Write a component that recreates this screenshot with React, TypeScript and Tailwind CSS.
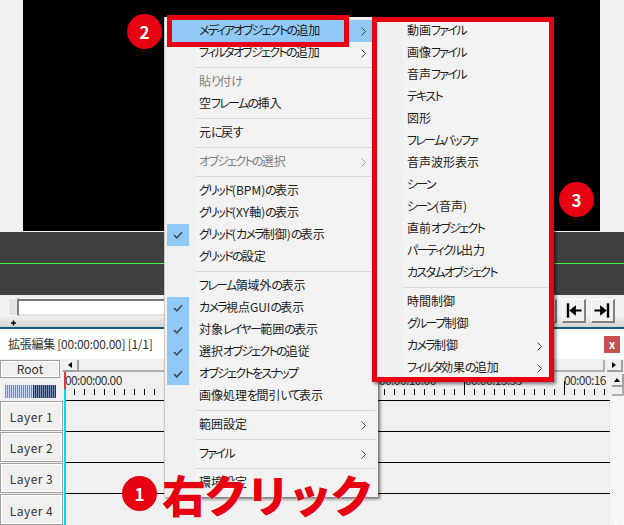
// AviUtl timeline right-click menu, annotated screenshot

// ── Menu data ──────────────────────────────────────────────────────────────

type Entry =
  | { sep: true }
  | { sep?: false; label: string; checked?: boolean; disabled?: boolean; arrow?: boolean; active?: boolean };

const MAIN_MENU: Entry[] = [
  { label: 'メディアオブジェクトの追加', arrow: true, active: true },
  { label: 'フィルタオブジェクトの追加', arrow: true },
  { sep: true },
  { label: '貼り付け', disabled: true },
  { label: '空フレームの挿入' },
  { sep: true },
  { label: '元に戻す' },
  { sep: true },
  { label: 'オブジェクトの選択', disabled: true, arrow: true },
  { sep: true },
  { label: 'グリッド(BPM)の表示' },
  { label: 'グリッド(XY軸)の表示' },
  { label: 'グリッド(カメラ制御)の表示', checked: true },
  { label: 'グリッドの設定' },
  { sep: true },
  { label: 'フレーム領域外の表示' },
  { label: 'カメラ視点GUIの表示', checked: true },
  { label: '対象レイヤー範囲の表示', checked: true },
  { label: '選択オブジェクトの追従', checked: true },
  { label: 'オブジェクトをスナップ', checked: true },
  { label: '画像処理を間引いて表示' },
  { sep: true },
  { label: '範囲設定', arrow: true },
  { sep: true },
  { label: 'ファイル', arrow: true },
  { sep: true },
  { label: '環境設定' },
];

const SUB_MENU: Entry[] = [
  { label: '動画ファイル' },
  { label: '画像ファイル' },
  { label: '音声ファイル' },
  { label: 'テキスト' },
  { label: '図形' },
  { label: 'フレームバッファ' },
  { label: '音声波形表示' },
  { label: 'シーン' },
  { label: 'シーン(音声)' },
  { label: '直前オブジェクト' },
  { label: 'パーティクル出力' },
  { label: 'カスタムオブジェクト' },
  { sep: true },
  { label: '時間制御' },
  { label: 'グループ制御' },
  { label: 'カメラ制御', arrow: true },
  { label: 'フィルタ効果の追加', arrow: true },
];

// ── Small drawings ─────────────────────────────────────────────────────────

function Chevron({ muted }: { muted?: boolean }) {
  return (
    <svg width="5" height="9" viewBox="0 0 5 9" className="ml-auto mr-[9px] shrink-0">
      <path d="M0.5 0.5L4.5 4.5L0.5 8.5" fill="none" stroke={muted ? '#a6a6a6' : '#444'} strokeWidth="1" />
    </svg>
  );
}

function Check() {
  return (
    <svg width="10" height="8" viewBox="0 0 10 8">
      <path d="M1 4L3.8 6.8L9 1.2" fill="none" stroke="#3c4a55" strokeWidth="1.5" />
    </svg>
  );
}

function JumpIcon({ flip }: { flip?: boolean }) {
  return (
    <svg width="22" height="22" viewBox="0 0 22 22" className={flip ? '-scale-x-100' : ''}>
      <rect x="4" y="3" width="2.5" height="15" fill="#000" />
      <path d="M6.5 10.5L13.5 5V9.5H19.5V11.5H13.5V16Z" fill="#000" />
    </svg>
  );
}

// Kana are set narrower than kanji in the menu font, so tighten only those runs
function MenuLabel({ text }: { text: string }) {
  const runs = text.match(/[\u3040-\u30ff]+|[^\u3040-\u30ff]+/g) ?? [];
  return (
    <>
      {runs.map((run, i) =>
        /[\u3040-\u30ff]/.test(run) ? (
          <span key={i} className="tracking-[-1.7px]">
            {run}
          </span>
        ) : (
          run
        ),
      )}
    </>
  );
}

// ── Menu ───────────────────────────────────────────────────────────────────

function MenuRows({ items, gutter, textPad }: { items: Entry[]; gutter: string; textPad: string }) {
  return (
    <>
      {items.map((item, i) =>
        item.sep ? (
          <div key={i} className={`h-[7px] flex items-center ${gutter}`}>
            <div className="h-px w-full bg-[#d7d7d7]" />
          </div>
        ) : (
          <div
            key={i}
            className={`flex h-[22px] items-center whitespace-nowrap text-[12px] ${
              item.active ? 'bg-[#90c8f6]' : ''
            } ${item.disabled ? 'text-[#808080]' : 'text-[#1c1c1c]'}`}
          >
            <div
              className={`flex h-full w-[22px] shrink-0 items-center justify-center ${
                item.checked ? 'bg-[#90c8f6]' : ''
              }`}
            >
              {item.checked && <Check />}
            </div>
            <span className={`pb-[2px] ${textPad}`}>
              <MenuLabel text={item.label} />
            </span>
            {item.arrow && <Chevron muted={item.disabled} />}
          </div>
        ),
      )}
    </>
  );
}

function Badge({ n, className }: { n: number; className: string }) {
  return (
    <div
      className={`absolute flex h-[35px] w-[35px] items-center justify-center rounded-full bg-[#e60012] text-[17px] font-bold text-white ${className}`}
    >
      {n}
    </div>
  );
}

// ── Timeline pieces ────────────────────────────────────────────────────────

const LAYER_BTN =
  'flex h-[30px] w-[63px] items-center justify-center border border-[#a0a0a0] pt-[2px] shadow-[inset_0_0_0_1px_#fff] text-[12px] text-[#333] tracking-[0.04em]';

function Ruler() {
  const ticks = [];
  for (let x = 74; x < 610; x += 10) {
    const big = (x - 64) % 100 === 0;
    ticks.push(<line key={x} x1={x - 64 + 0.5} x2={x - 64 + 0.5} y1={big ? 9 : 17} y2={23} stroke="#000" />);
  }
  return (
    <div className="relative h-[29px] border-b border-black text-[12px] leading-[16px] tracking-[-0.6px] text-[#333]">
      <svg width="546" height="28" className="absolute left-0 top-0">
        {ticks}
      </svg>
      <span className="absolute left-[1px] top-0">00:00:00.00</span>
      <span className="absolute left-[315px] top-0">00:00:10.00</span>
      <span className="absolute left-[401px] top-0">00:00:13.33</span>
      <span className="absolute left-[500px] top-0">00:00:16</span>
    </div>
  );
}

export default function App() {
  return (
    <div className="relative h-[525px] w-[624px] overflow-hidden bg-[#f0f0f0] font-['Noto_Sans_CJK_JP','Noto_Sans',sans-serif] [font-feature-settings:'palt']">
      {/* Preview */}
      <div className="h-[231px] pl-[23px]">
        <div className="h-full w-[577px] bg-black" />
      </div>
      <div className="h-px bg-[#f4f4f4]" />

      {/* Dark band with the green line */}
      <div className="flex h-[63px] flex-col bg-[#404040]">
        <div className="h-[31px]" />
        <div className="h-px bg-[#4cf04c]" />
      </div>

      {/* Seek bar */}
      <div className="flex h-[32px] bg-[linear-gradient(180deg,#f0f0f0_65%,#d4d4d4_100%)] pl-[8px]">
        <div className="relative h-[23px] w-[11px] shrink-0">
          <div className="mt-[3px] h-[18px] w-[11px] border border-r-2 border-[#f8f8f8] border-r-[#808080] bg-[#e4e4e4]" />
          <svg width="13" height="12" className="absolute left-0 top-[20px]">
            <path d="M0.5 1L5.5 5L9.5 1Z" fill="#e4e4e4" stroke="#f8f8f8" strokeWidth="1" />
            <path d="M3 8H8M5.5 5.5V10.5" stroke="#000" strokeWidth="1.5" />
          </svg>
        </div>
        <div className="mt-[4px] h-[17px] flex-1 border-t-2 border-b-2 border-t-[#777] border-b-[#e2e2e2] bg-white" />
        <div className="ml-[4px] mr-[9px] mt-[4px] flex gap-[5px]">
          {[false, false, true].map((flip, i) => (
            <div
              key={i}
              className="flex h-[24px] w-[24px] items-center justify-center border-t border-l border-b-2 border-r-2 border-t-white border-l-white border-b-[#808080] border-r-[#808080] bg-[#f0f0f0]"
            >
              <JumpIcon flip={flip} />
            </div>
          ))}
        </div>
      </div>
      <div className="h-[2px] bg-[#1d5a78]" />

      {/* Window title */}
      <div className="flex h-[30px] items-center justify-between bg-white pl-[8px] pr-[4px]">
        <span className="text-[12px] tracking-[-0.27px] text-[#333]">拡張編集 [00:00:00.00] [1/1]</span>
        <div className="flex h-[17px] w-[16px] items-center justify-center bg-[#c75050] text-[11px] font-bold leading-none text-white">
          x
        </div>
      </div>

      {/* Timeline */}
      <div className="relative flex h-[166px] pt-px">
        <div className="flex w-[63px] shrink-0 flex-col">
          <div className="flex h-[18px] w-[60px] items-center justify-center border border-[#a0a0a0] shadow-[inset_0_0_0_1px_#fff] text-[12px] text-[#333]">
            Root
          </div>
          <div className="ml-[5px] mt-[7px] flex h-[13px] w-[51px]">
            <div className="h-full w-[28px] bg-[repeating-linear-gradient(90deg,#5f8fdc_0_1px,#c8d8f4_1px_2px)]" />
            <div className="h-full w-[23px] bg-[repeating-linear-gradient(90deg,#1f3864_0_1px,#7d8fb3_1px_2px)]" />
          </div>
          <div className="mt-[3px] flex flex-col gap-px">
            <div className={LAYER_BTN}>Layer 1</div>
            <div className={LAYER_BTN}>Layer 2</div>
            <div className={LAYER_BTN}>Layer 3</div>
            <div className={`${LAYER_BTN} h-[31px]`}>Layer 4</div>
          </div>
        </div>

        <div className="flex min-w-0 flex-1 flex-col">
          {/* Horizontal scrollbar */}
          <div className="flex h-[12px] pr-[1px]">
            <div className="flex w-[16px] items-center justify-center border-r-2 border-b-2 border-[#a0a0a0]">
              <div className="h-0 w-0 border-y-[3px] border-r-[4px] border-y-transparent border-r-black" />
            </div>
            <div className="flex-1 border-b-2 border-r-2 border-[#b0b0b0] bg-[#f0f0f0]" />
            <div className="ml-[2px] flex w-[16px] items-center justify-center border-r-2 border-b-2 border-[#a0a0a0]">
              <div className="h-0 w-0 border-y-[3px] border-l-[4px] border-y-transparent border-l-black" />
            </div>
          </div>

          <div className="flex flex-1">
            <div className="ml-[1px] flex w-[546px] shrink-0 flex-col">
              <Ruler />
              <div className="h-[31px] border-b border-black" />
              <div className="h-[31px] border-b border-black" />
              <div className="h-[31px] border-b border-black" />
            </div>
            {/* Vertical scrollbar */}
            <div className="flex flex-1 flex-col">
              <div className="ml-[2px] mt-[2px] flex h-[13px] items-center justify-center border-r-2 border-b-2 border-[#a0a0a0]">
                <div className="h-0 w-0 border-x-[3px] border-b-[4px] border-x-transparent border-b-black" />
              </div>
              <div className="ml-[2px] h-[9px] border-r-2 border-b-2 border-[#b0b0b0]" />
              <div className="flex-1 bg-[repeating-conic-gradient(#ffffff_0_25%,#f0f0f0_0_50%)] bg-[length:2px_2px]" />
            </div>
          </div>
        </div>

        {/* Playhead */}
        <div className="absolute left-[64px] top-[13px] h-[17px] w-[2px] bg-[#f0303c]" />
        <div className="absolute bottom-0 left-[64px] top-[30px] w-[2px] bg-[#00e0e8]" />
      </div>

      {/* Context menu */}
      <div className="absolute left-[164px] top-[17px] h-[480px] w-[214px] border-l border-[#c8c8c8] bg-[linear-gradient(90deg,#f0f0f0_31px,#f2f2f2_31px)] py-[3px] pl-[2px] pr-[3px] shadow-[2px_2px_3px_rgba(0,0,0,0.55)]">
        <MenuRows items={MAIN_MENU} gutter="ml-[29px]" textPad="pl-[10px]" />
      </div>

      {/* Media object submenu */}
      <div className="absolute left-[372px] top-[17px] h-[365px] w-[182px] bg-[linear-gradient(90deg,#eeeeee_31px,#f2f2f2_31px)] py-[3px] pl-[5px] pr-[3px] shadow-[2px_2px_3px_rgba(0,0,0,0.5)]">
        <MenuRows items={SUB_MENU} gutter="ml-[26px]" textPad="pl-[8px]" />
        <div className="absolute inset-0 border-[5px] border-[#e60012]" />
      </div>

      {/* Annotations */}
      <div className="absolute left-[167px] top-[15px] h-[32px] w-[182px] border-[5px] border-[#e60012]" />
      <Badge n={2} className="left-[127px] top-[14px]" />
      <Badge n={3} className="left-[559px] top-[182px]" />
      <Badge n={1} className="left-[122px] top-[476px]" />
      <div className="absolute left-[162px] top-[464px] whitespace-nowrap text-[44px] font-black leading-[60px] tracking-[-2px] text-[#e60012] [font-feature-settings:normal] [text-shadow:0_0_2px_#fff]">
        右クリック
      </div>
    </div>
  );
}
